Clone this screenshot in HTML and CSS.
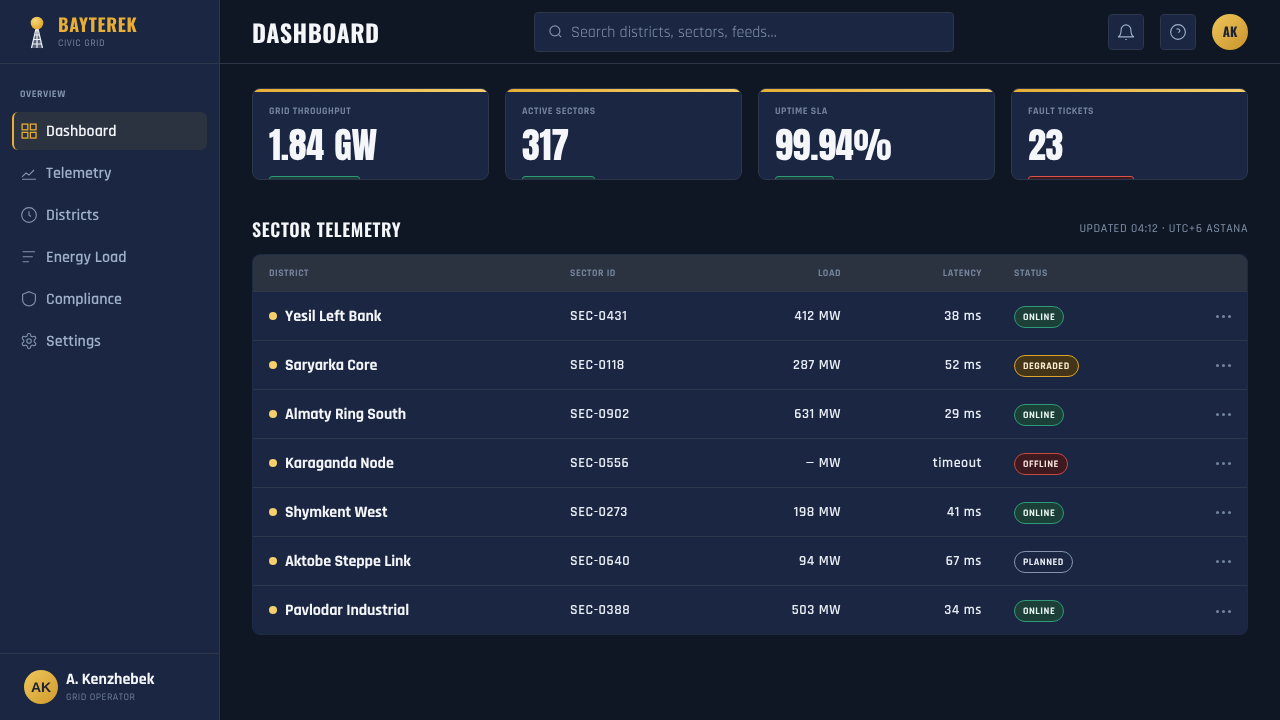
FILE: index.html
```html
<!DOCTYPE html>
<html lang="en">
<head>
<meta charset="utf-8">
<title>Bayterek Civic Grid</title>
<link rel="stylesheet" href="styles.css">
</head>
<body>
<div class="app">
  <aside class="sidebar">
    <div class="brand">
      <svg class="brand-mark" viewBox="0 0 20 36" width="20" height="36" aria-hidden="true">
        <defs><radialGradient id="ball" cx="35%" cy="30%" r="75%"><stop offset="0" stop-color="#f8d778"/><stop offset="1" stop-color="#e0a428"/></radialGradient></defs>
        <path d="M10 12L15.500 33H4.500z" fill="#eef2f8" fill-opacity=".3"/>
        <g stroke="#eef2f8" stroke-width="1.200" fill="none">
          <path d="M9 14L4.500 33M11 14l4.500 19M10 14v19M7.800 20h4.400M7 24.500h6M6 29h8"/>
        </g>
        <circle cx="10" cy="8" r="6.300" fill="url(#ball)"/>
      </svg>
      <div class="brand-text">
        <div class="brand-name">BAYTEREK</div>
        <div class="brand-sub">CIVIC GRID</div>
      </div>
    </div>
    <nav class="nav">
      <div class="nav-label">OVERVIEW</div>
      <a class="nav-item active">
        <svg class="icon" viewBox="0 0 24 24"><rect x="2.800" y="2.800" width="7.600" height="7.600"/><rect x="13.800" y="2.800" width="7.600" height="7.600"/><rect x="2.800" y="13.800" width="7.600" height="7.600"/><rect x="13.800" y="13.800" width="7.600" height="7.600"/></svg>
        <span>Dashboard</span>
      </a>
      <a class="nav-item">
        <svg class="icon" viewBox="0 0 24 24"><path d="M2.700 20.400h18.600M2.700 17.300L8 12l4 2.700L18.700 8"/></svg>
        <span>Telemetry</span>
      </a>
      <a class="nav-item">
        <svg class="icon" viewBox="0 0 24 24"><circle cx="12" cy="12" r="9.800"/><path d="M12 7v5l2.500 2"/></svg>
        <span>Districts</span>
      </a>
      <a class="nav-item">
        <svg class="icon" viewBox="0 0 24 24"><path d="M3.600 5H20M3.600 11.700H17M3.600 18.300H12"/></svg>
        <span>Energy Load</span>
      </a>
      <a class="nav-item">
        <svg class="icon" viewBox="0 0 24 24"><path d="M12 2.300l8.500 3.500v7.400c0 4.300-3.600 7-8.500 8.200-4.900-1.200-8.500-3.900-8.500-8.200V5.800z"/></svg>
        <span>Compliance</span>
      </a>
      <a class="nav-item">
        <svg class="icon" viewBox="0 0 24 24"><circle cx="12" cy="12" r="3"/><path d="M12.220 2h-.44a2 2 0 0 0-2 2v.18a2 2 0 0 1-1 1.730l-.43.25a2 2 0 0 1-2 0l-.15-.08a2 2 0 0 0-2.730.73l-.22.38a2 2 0 0 0 .73 2.730l.15.1a2 2 0 0 1 1 1.720v.51a2 2 0 0 1-1 1.740l-.15.09a2 2 0 0 0-.73 2.730l.22.38a2 2 0 0 0 2.730.73l.15-.08a2 2 0 0 1 2 0l.43.25a2 2 0 0 1 1 1.730V20a2 2 0 0 0 2 2h.44a2 2 0 0 0 2-2v-.18a2 2 0 0 1 1-1.730l.43-.25a2 2 0 0 1 2 0l.15.08a2 2 0 0 0 2.730-.73l.22-.39a2 2 0 0 0-.73-2.730l-.15-.08a2 2 0 0 1-1-1.740v-.5a2 2 0 0 1 1-1.740l.15-.09a2 2 0 0 0 .73-2.730l-.22-.38a2 2 0 0 0-2.730-.73l-.15.08a2 2 0 0 1-2 0l-.43-.25a2 2 0 0 1-1-1.730V4a2 2 0 0 0-2-2z"/></svg>
        <span>Settings</span>
      </a>
    </nav>
    <div class="user">
      <div class="user-avatar">AK</div>
      <div class="user-info">
        <div class="user-name">A. Kenzhebek</div>
        <div class="user-role">GRID OPERATOR</div>
      </div>
    </div>
  </aside>
  <div class="main">
    <header class="topbar">
      <h1 class="title">DASHBOARD</h1>
      <label class="search">
        <svg class="search-icon" viewBox="0 0 24 24"><circle cx="11" cy="11" r="8"/><path d="M21 21l-4.300-4.300"/></svg>
        <span class="search-text">Search districts, sectors, feeds…</span>
      </label>
      <div class="top-actions">
        <button class="icon-btn"><svg class="btn-icon" viewBox="0 0 24 24"><path d="M5.500 9a6.500 6.500 0 0 1 13 0c0 6 2 8.500 4 9.500H1.500c2-1 4-3.500 4-9.500z"/><path d="M11 22h2"/></svg></button>
        <button class="icon-btn"><svg class="btn-icon" viewBox="0 0 24 24"><circle cx="12" cy="12" r="9.800"/><path d="M10 8.300a2.800 2.800 0 0 1 4.500 1.700c0 1.300-1 2-2 2.800"/></svg></button>
        <div class="top-avatar">AK</div>
      </div>
    </header>
    <main class="content">
      <section class="kpis">
        <div class="kpi"><div class="kpi-label">GRID THROUGHPUT</div><div class="kpi-value">1.84 GW</div><div class="tag tag-green w91"></div></div>
        <div class="kpi"><div class="kpi-label">ACTIVE SECTORS</div><div class="kpi-value">317</div><div class="tag tag-green w73"></div></div>
        <div class="kpi"><div class="kpi-label">UPTIME SLA</div><div class="kpi-value">99.94%</div><div class="tag tag-green w59"></div></div>
        <div class="kpi"><div class="kpi-label">FAULT TICKETS</div><div class="kpi-value">23</div><div class="tag tag-red w106"></div></div>
      </section>
      <div class="section-head">
        <h2 class="section-title">SECTOR TELEMETRY</h2>
        <div class="section-meta">UPDATED 04:12 · UTC+6 ASTANA</div>
      </div>
      <div class="table-wrap">
        <table class="table">
          <colgroup><col class="c1"><col class="c2"><col class="c3"><col class="c4"><col class="c5"><col></colgroup>
          <thead><tr><th>DISTRICT</th><th>SECTOR ID</th><th class="r">LOAD</th><th class="r">LATENCY</th><th>STATUS</th><th></th></tr></thead>
          <tbody>
            <tr><td class="district"><i class="dot"></i>Yesil Left Bank</td><td>SEC-0431</td><td class="r">412 MW</td><td class="r">38 ms</td><td class="status"><span class="pill online">ONLINE</span></td><td class="more"><b></b><b></b><b></b></td></tr>
            <tr><td class="district"><i class="dot"></i>Saryarka Core</td><td>SEC-0118</td><td class="r">287 MW</td><td class="r">52 ms</td><td class="status"><span class="pill degraded">DEGRADED</span></td><td class="more"><b></b><b></b><b></b></td></tr>
            <tr><td class="district"><i class="dot"></i>Almaty Ring South</td><td>SEC-0902</td><td class="r">631 MW</td><td class="r">29 ms</td><td class="status"><span class="pill online">ONLINE</span></td><td class="more"><b></b><b></b><b></b></td></tr>
            <tr><td class="district"><i class="dot"></i>Karaganda Node</td><td>SEC-0556</td><td class="r">— MW</td><td class="r">timeout</td><td class="status"><span class="pill offline">OFFLINE</span></td><td class="more"><b></b><b></b><b></b></td></tr>
            <tr><td class="district"><i class="dot"></i>Shymkent West</td><td>SEC-0273</td><td class="r">198 MW</td><td class="r">41 ms</td><td class="status"><span class="pill online">ONLINE</span></td><td class="more"><b></b><b></b><b></b></td></tr>
            <tr><td class="district"><i class="dot"></i>Aktobe Steppe Link</td><td>SEC-0640</td><td class="r">94 MW</td><td class="r">67 ms</td><td class="status"><span class="pill planned">PLANNED</span></td><td class="more"><b></b><b></b><b></b></td></tr>
            <tr><td class="district"><i class="dot"></i>Pavlodar Industrial</td><td>SEC-0388</td><td class="r">503 MW</td><td class="r">34 ms</td><td class="status"><span class="pill online">ONLINE</span></td><td class="more"><b></b><b></b><b></b></td></tr>
          </tbody>
        </table>
      </div>
    </main>
  </div>
</div>
</body>
</html>
```

FILE: styles.css
```css
* { box-sizing: border-box; }
html, body { margin: 0; height: 100%; }
body {
  background: #0f1724;
  color: #f4f6fa;
  font-family: Rajdhani, "Roboto", "Noto Sans", sans-serif;
  text-rendering: geometricPrecision;
  overflow: hidden;
}
.app { display: flex; height: 720px; will-change: transform; }

.sidebar {
  width: 220px;
  flex: none;
  background: #1a2642;
  border-right: 1px solid #2c3749;
  display: flex;
  flex-direction: column;
}
.brand {
  height: 64px;
  flex: none;
  display: flex;
  align-items: center;
  gap: 11px;
  padding-left: 27px;
  border-bottom: 1px solid #2c3749;
}
.brand-mark { display: block; margin-top: 3px; }
.brand-name {
  font-family: Oswald, "Liberation Sans Narrow", "Liberation Sans", sans-serif;
  font-weight: 700;
  font-size: 18px;
  line-height: 22px;
  letter-spacing: .72px;
  color: #e8ae35;
}
.brand-sub { font-size: 10px; line-height: 12px; letter-spacing: .5px; color: #75849c; font-weight: 500; margin-top: 2px; }

.nav { flex: 1; padding: 25px 12px 0; display: flex; flex-direction: column; gap: 4px; }
.nav-label {
  font-size: 10px;
  font-weight: 700;
  letter-spacing: .5px;
  line-height: 12px;
  color: #8394ac;
  padding-left: 8px;
  margin-bottom: 7px;
}
.nav-item {
  height: 38px;
  display: flex;
  align-items: center;
  gap: 8px;
  padding-left: 6px;
  border-left: 2px solid transparent;
  border-radius: 6px;
  font-size: 16px;
  font-weight: 600;
  color: #9fb0c9;
}
.nav-item.active { background: #2a333f; border-left-color: #e8ae35; color: #f4f6fa; }
.icon { width: 18px; height: 18px; flex: none; fill: none; stroke: #8394ac; stroke-width: 1.5; }
.nav-item.active .icon { stroke: #e8ae35; stroke-width: 1.7; }

.user {
  height: 67px;
  flex: none;
  border-top: 1px solid #2c3749;
  display: flex;
  align-items: center;
  gap: 8px;
  padding-left: 24px;
}
.user-avatar {
  width: 34px; height: 34px; border-radius: 50%;
  background: linear-gradient(135deg, #f0c65c, #cf9a2c);
  color: #1a2233;
  font-family: "Liberation Sans", sans-serif;
  font-weight: 700;
  font-size: 14px;
  display: flex; align-items: center; justify-content: center;
}
.user-info { margin-top: 2px; }
.user-name { font-size: 16px; font-weight: 700; line-height: 18px; color: #f4f6fa; }
.user-role { font-size: 10px; line-height: 16px; letter-spacing: .5px; color: #6f7f98; font-weight: 500; margin-top: 1px; }

.main { flex: 1; min-width: 0; display: flex; flex-direction: column; }
.topbar {
  height: 64px;
  flex: none;
  border-bottom: 1px solid #2c3749;
  display: flex;
  align-items: center;
  padding: 0 32px;
  position: relative;
}
.title {
  margin: 0;
  width: 282px;
  flex: none;
  font-family: Oswald, "Liberation Sans Narrow", "Liberation Sans", sans-serif;
  font-weight: 700;
  font-size: 24px;
  letter-spacing: .48px;
  color: #f4f6fa;
}
.search {
  width: 420px;
  height: 40px;
  flex: none;
  background: #1a2642;
  border: 1px solid #2c3749;
  border-radius: 4px;
  display: flex;
  align-items: center;
  gap: 8px;
  padding-left: 13px;
}
.search-icon { width: 15px; height: 15px; fill: none; stroke: #8394ac; stroke-width: 1.8; flex: none; }
.search-text { font-size: 16px; font-weight: 400; color: #8394ac; padding-top: 1px; }
.top-actions { margin-left: auto; display: flex; align-items: center; gap: 16px; }
.icon-btn {
  width: 36px; height: 36px; padding: 0;
  background: #1a2642;
  border: 1px solid #2c3749;
  border-radius: 4px;
  display: flex; align-items: center; justify-content: center;
}
.btn-icon { width: 18px; height: 18px; fill: none; stroke: #9fb0c9; stroke-width: 1.5; }
.top-avatar {
  width: 36px; height: 36px; border-radius: 50%;
  background: linear-gradient(135deg, #f0c65c, #c8932a);
  color: #1a2233;
  font-family: Oswald, "Liberation Sans Narrow", "Liberation Sans", sans-serif;
  font-weight: 700;
  font-size: 13px;
  padding-bottom: 2px;
  display: flex; align-items: center; justify-content: center;
}

.content { padding: 24px 32px; }
.kpis { display: grid; grid-template-columns: repeat(4, 1fr); gap: 16px; }
.kpi {
  height: 92px;
  overflow: hidden;
  position: relative;
  background: #1a2642;
  border: 1px solid #2c3749;
  border-radius: 8px;
  padding: 17px 16px 0;
}
.kpi::before {
  content: "";
  position: absolute;
  left: 0; right: 0; top: 0;
  height: 3px;
  background: linear-gradient(90deg, #e8ae35, #f5cf6b);
}
.kpi-label { font-size: 10px; font-weight: 700; letter-spacing: .5px; line-height: 12px; color: #75849c; }
.kpi-value {
  font-family: Anton, Oswald, sans-serif;
  font-weight: 400;
  font-size: 36px;
  line-height: 46px;
  letter-spacing: -.2px;
  word-spacing: 2px;
  margin-top: 4px;
  color: #f4f6fa;
}
.tag { height: 20px; margin-top: 8px; border: 1px solid; border-radius: 3px; }
.tag-green { background: #1c4038; border-color: #2f9a78; }
.tag-red { background: #3d1a1f; border-color: #d9534a; }
.w91 { width: 91px; } .w73 { width: 73px; } .w59 { width: 59px; } .w106 { width: 106px; }

.section-head { display: flex; justify-content: space-between; align-items: center; margin-top: 36px; height: 26px; }
.section-title {
  margin: 0;
  padding-top: 2px;
  font-family: Oswald, "Liberation Sans Narrow", "Liberation Sans", sans-serif;
  font-weight: 600;
  font-size: 18px;
  letter-spacing: .66px;
  color: #f4f6fa;
}
.section-meta { font-size: 12px; font-weight: 500; letter-spacing: .6px; color: #8394ac; }

.table-wrap { margin-top: 12px; background: #1a2642; border: 1px solid #1f2a44; border-radius: 8px; overflow: hidden; }
.table { width: 100%; border-collapse: collapse; table-layout: fixed; }
.c1 { width: 301px; } .c2 { width: 150px; } .c3 { width: 153px; } .c4 { width: 141px; } .c5 { width: 150px; }
th {
  height: 36px;
  background: #2a333f;
  padding: 2px 16px 0;
  border-bottom: 1px solid #2c3749;
  text-align: left;
  font-size: 10px;
  font-weight: 700;
  letter-spacing: .5px;
  color: #75849c;
}
td {
  height: 49px;
  padding: 0 16px;
  border-bottom: 1px solid #2c3749;
  font-size: 14px;
  font-weight: 600;
  letter-spacing: .56px;
  color: #e8edf5;
}
tr:last-child td { border-bottom: 0; }
.r { text-align: right; }
.district { font-size: 16px; font-weight: 700; letter-spacing: -.1px; color: #f4f6fa; padding-top: 2px; }
.status, .more { padding-top: 2px; }
.dot { display: inline-block; width: 8px; height: 8px; border-radius: 50%; background: #f5cf6b; margin-right: 8px; vertical-align: 1px; }
.pill {
  display: inline-block;
  height: 22px;
  line-height: 22px;
  padding: 0 8px;
  border: 1px solid;
  border-radius: 11px;
  font-size: 10px;
  font-weight: 700;
  letter-spacing: .5px;
}
.online { background: #1c4038; border-color: #2f9a78; color: #e9f5f0; }
.degraded { background: #453518; border-color: #e0a428; color: #f8ecd0; }
.offline { background: #3d1a1f; border-color: #c9493f; color: #f8e2df; }
.planned { background: transparent; border-color: #8394ac; color: #e8edf5; }
.more { text-align: right; }
.more b { display: inline-block; width: 3px; height: 3px; border-radius: 50%; background: #75849c; margin-left: 3px; vertical-align: middle; }
```
